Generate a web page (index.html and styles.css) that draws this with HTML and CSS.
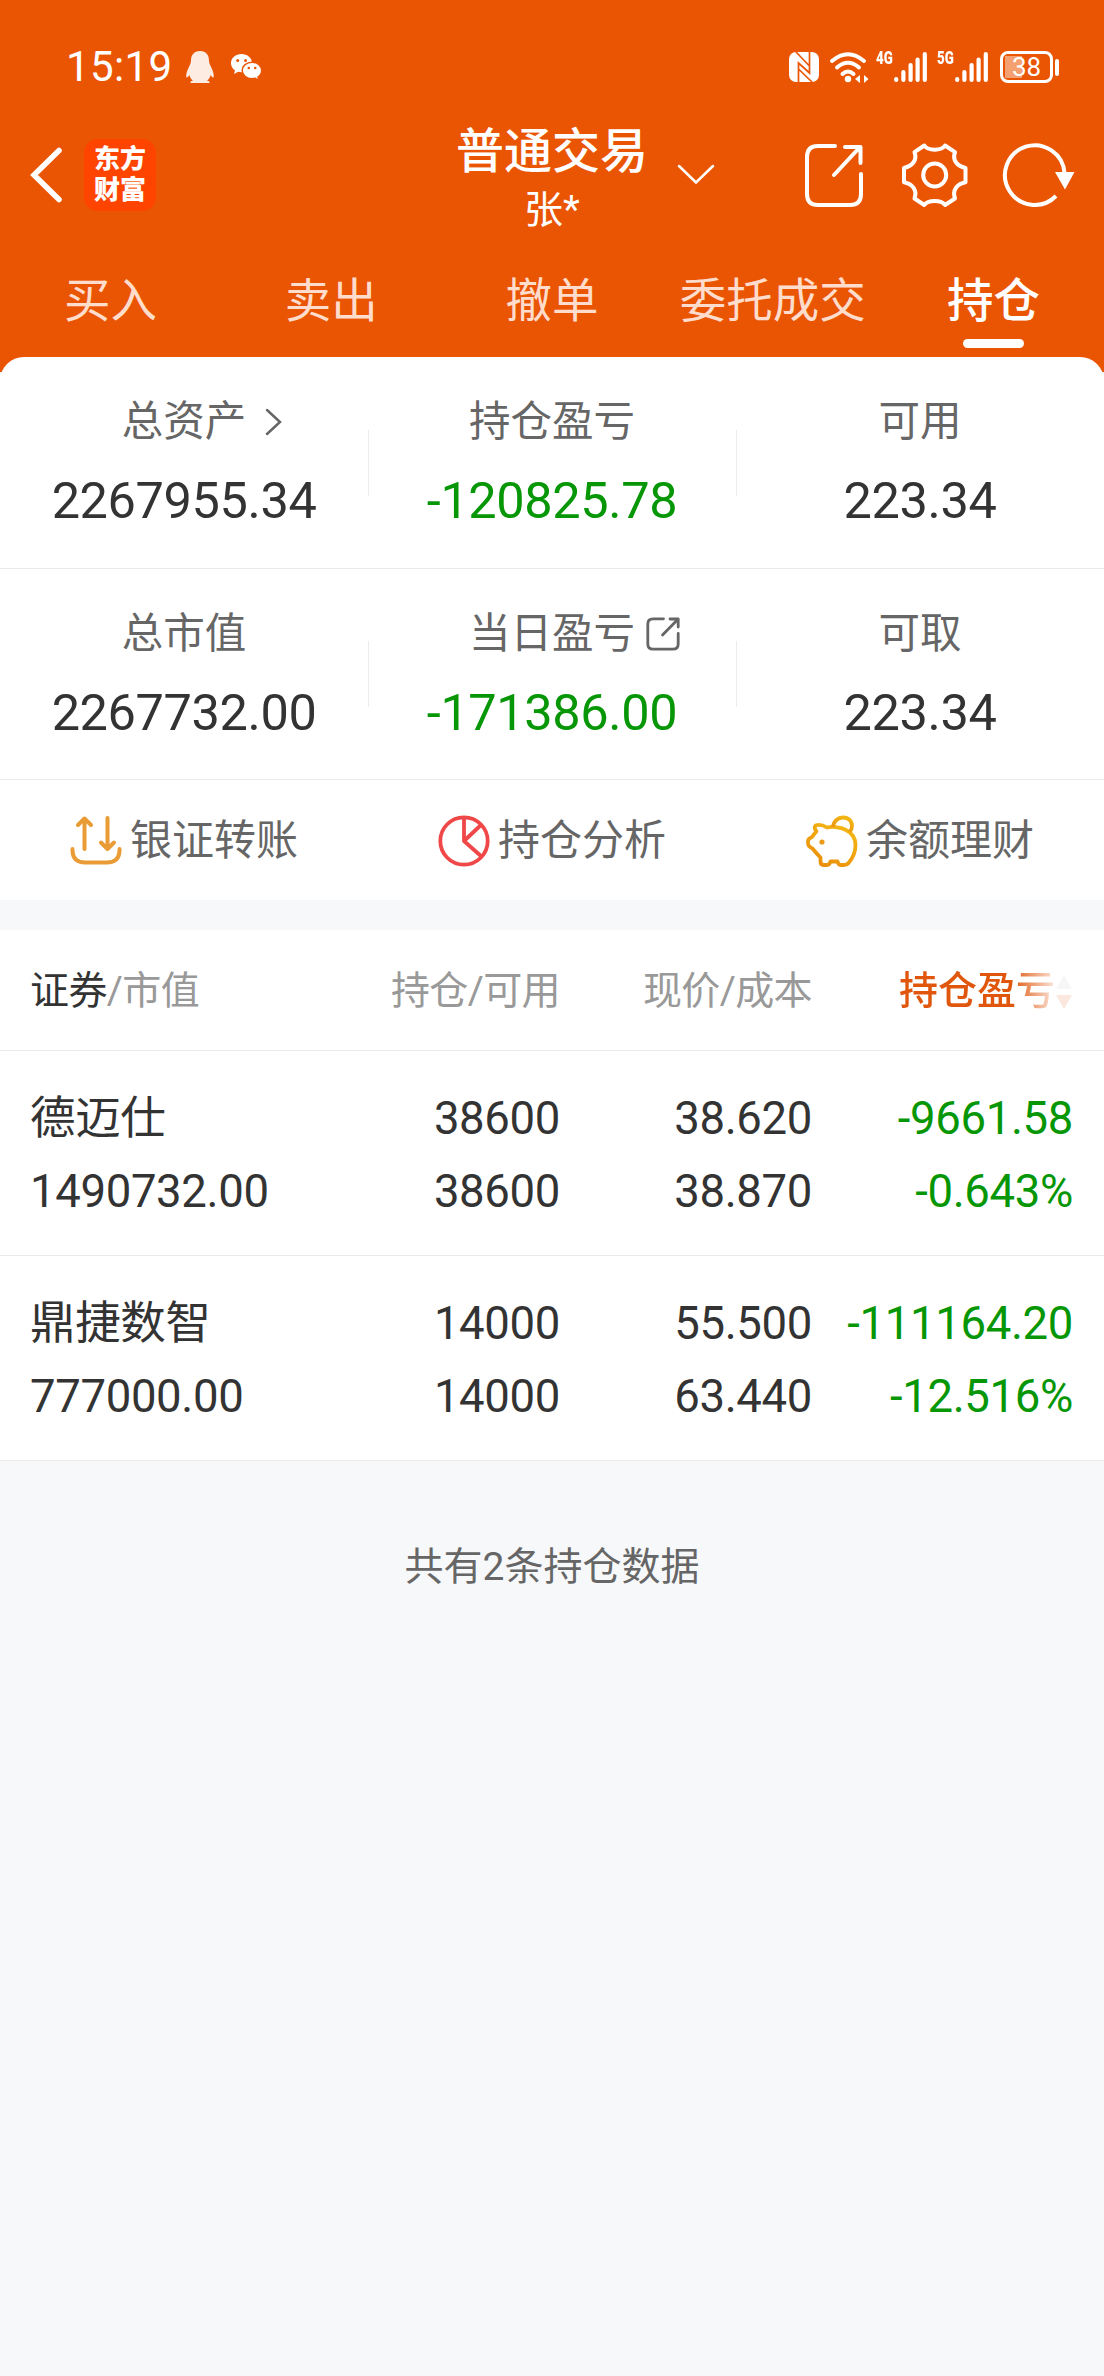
FILE: index.html
```html
<!DOCTYPE html>
<html lang="zh-CN">
<head>
<meta charset="utf-8">
<title>普通交易 - 持仓</title>
<link rel="stylesheet" href="styles.css">
</head>
<body>
<header class="header">
  <div class="status">
    <span class="time">15:19</span>
    <svg class="qq" width="30" height="34" viewBox="0 0 30 34"><path fill="#fdece2" d="M15 1C8.500 1 6 5.500 6 10.500C6 13 5 14.500 3.500 18C1.500 22 .8 26 1.500 27.500C2.300 28 3.500 26.500 4.500 25C5 28 6.500 29.500 8 30.500C6 31 5 32 5.500 33H24.500C25 32 24 31 22 30.500C23.500 29.500 25 28 25.500 25C26.500 26.500 27.700 28 28.500 27.500C29.200 26 28.500 22 26.500 18C25 14.500 24 13 24 10.500C24 5.500 21.500 1 15 1Z"/></svg>
    <svg class="wechat" width="32" height="28" viewBox="0 0 32 28"><path fill="#fff" d="M11.500 1C5.500 1 1 5 1 10.200c0 3 1.600 5.500 4 7.200L4 21l4.200-2.200c1 .3 2.200.4 3.300.4C17.500 19.200 22 15.300 22 10.200S17.500 1 11.500 1Z"/><path fill="#fff" stroke="#ea5504" stroke-width="1.500" d="M22 9.200c-5.400 0-9.800 3.700-9.800 8.300s4.400 8.200 9.800 8.200c1.100 0 2.200-.1 3.200-.4l3.700 2-.9-3.300c2.300-1.600 3.700-3.800 3.700-6.500 0-4.600-4.300-8.300-9.700-8.300Z"/><g fill="#ea5504"><circle cx="7.700" cy="7.500" r="1.500"/><circle cx="15.500" cy="7.500" r="1.500"/><circle cx="18.800" cy="15" r="1.300"/><circle cx="25.200" cy="15" r="1.300"/></g></svg>
    <div class="status-right">
      <svg width="30" height="30" viewBox="0 0 30 30"><rect width="30" height="30" rx="7" fill="#fff"/><path d="M9.500 30V11L20.500 21V0M7 0L20.500 14M9.500 17L23 30" fill="none" stroke="#ea5504" stroke-width="1.700"/></svg>
      <svg class="wifi" width="39" height="31" viewBox="0 0 39 31"><g fill="none" stroke="#fff" stroke-width="4" stroke-linecap="round"><path d="M2 9Q18 -4.500 34 9"/><path d="M7 15.500Q18 6 29 15.500"/><path d="M12.500 22Q18 17 23.500 22"/></g><circle cx="18" cy="27" r="3.200" fill="#fff"/><path d="M25 27l5-4v8zM38.500 27l-4.500-4v8zM31.500 23v8" fill="#fff"/></svg>
      <span class="net"><span>4G</span></span>
      <svg class="bars" width="33" height="30" viewBox="0 0 33 30"><path d="M2.200 27v1M9.400 20v8M16.600 13v15M23.600 7.500v20.500M30.800 2v26" stroke="#fff" stroke-width="4.200" stroke-linecap="round"/></svg>
      <span class="net net-2"><span>5G</span></span>
      <svg class="bars" width="33" height="30" viewBox="0 0 33 30"><path d="M2.200 27v1M9.400 20v8M16.600 13v15M23.600 7.500v20.500M30.800 2v26" stroke="#fff" stroke-width="4.200" stroke-linecap="round"/></svg>
      <div class="battery">38</div><i class="nub"></i>
    </div>
  </div>

  <div class="nav">
    <svg class="back" width="34" height="58" viewBox="0 0 34 58"><path d="M30 4.500L5 29L30 53.500" fill="none" stroke="#fff" stroke-width="5.500" stroke-linecap="round"/></svg>
    <div class="logo"><span>东方</span><span>财富</span></div>
    <div class="account">
      <div class="title">普通交易</div>
      <div class="user">张*</div>
    </div>
    <svg class="down" width="38" height="22" viewBox="0 0 38 22"><path d="M2 3L19 19.500L36 3" fill="none" stroke="#fff" stroke-width="2.500" stroke-linecap="round"/></svg>
    <svg class="share" width="60" height="66" viewBox="0 0 60 66"><g fill="none" stroke="#fff" stroke-width="4" stroke-linecap="round" stroke-linejoin="round"><path d="M31 3H14Q3 3 3 14V51Q3 62 14 62H46Q57 62 57 51V31"/><path d="M30 32L56 4M41 4H56.500V20"/></g></svg>
    <svg class="gear" width="66" height="66" viewBox="0 0 66 66"><g fill="none" stroke="#fff" stroke-width="4" stroke-linejoin="round"><path d="M22.300 2.500C26 8 39.400 8 43 2.500L53 9.200C50 17 55 23 63.500 25V39.300C55 41 50 47 53 55.500L43 62C39.400 56.500 26 56.500 22.300 62L12.500 55.500C15.500 47 10.500 41 2 39.300V25C10.500 23 15.500 17 12.500 9.200Z"/><circle cx="32.700" cy="32" r="11.500"/></g></svg>
    <svg class="refresh" width="74" height="66" viewBox="0 0 74 66"><path d="M61.500 30A29.800 29.800 0 1 0 53 53" fill="none" stroke="#fff" stroke-width="4"/><path d="M52 29H71.500L62 46.500Z" fill="#fff"/></svg>
  </div>

  <nav class="tabs">
    <a>买入</a><a>卖出</a><a>撤单</a><a>委托成交</a><a class="active">持仓</a>
  </nav>
</header>

<div class="lip"></div>
<section class="summary">
  <div class="row">
    <div class="cell"><div class="label"><span>总资产</span><svg class="go" width="18" height="30" viewBox="0 0 18 30"><path d="M2 3L15 15L2 27" fill="none" stroke="#666" stroke-width="2.500" stroke-linecap="round"/></svg></div><div class="num">2267955.34</div></div>
    <div class="cell"><div class="label"><span>持仓盈亏</span></div><div class="num green">-120825.78</div></div>
    <div class="cell"><div class="label"><span>可用</span></div><div class="num">223.34</div></div>
  </div>
  <div class="row row-2">
    <div class="cell"><div class="label"><span>总市值</span></div><div class="num">2267732.00</div></div>
    <div class="cell"><div class="label"><span>当日盈亏</span><svg class="ext" width="34" height="34" viewBox="0 0 34 34"><g fill="none" stroke="#666" stroke-width="2.800" stroke-linecap="round" stroke-linejoin="round"><path d="M17.500 1.800H7Q1.800 1.800 1.800 7V27Q1.800 32.200 7 32.200H27Q32.200 32.200 32.200 27V16.500"/><path d="M16.500 18L32 2.200M24 2H32.200V10"/></g></svg></div><div class="num green">-171386.00</div></div>
    <div class="cell"><div class="label"><span>可取</span></div><div class="num">223.34</div></div>
  </div>
</section>

<section class="actions">
  <a><svg width="52" height="52" viewBox="0 0 52 52"><g fill="none" stroke="#e99c35" stroke-width="4" stroke-linecap="round" stroke-linejoin="round"><path d="M14.500 34V3.500M8 10L14.500 3.500L21 10M37.500 3V34M31 27.500L37.500 34L44 27.500"/><path d="M2.500 34V36Q3 47.500 15 47.500H37Q49 47.500 49.500 36V34"/></g></svg>银证转账</a>
  <a><svg width="52" height="52" viewBox="0 0 52 52"><g fill="none" stroke="#f04848" stroke-width="3.800" stroke-linejoin="round"><circle cx="26" cy="26" r="23.700"/><path d="M26 2.500V26L43.500 9.500M26 26L43.500 41.500"/></g></svg>持仓分析</a>
  <a><svg width="52" height="52" viewBox="0 0 52 52"><defs><linearGradient id="pig" x1="0" y1="1" x2=".6" y2="0"><stop offset="0" stop-color="#e98a0b"/><stop offset="1" stop-color="#f3b514"/></linearGradient></defs><g fill="none" stroke="url(#pig)" stroke-width="3.800" stroke-linejoin="round"><path d="M9.500 10.500C13 9 17 10 21 12.500C25 11.500 34 11.500 40 15C47 18.500 49.500 24 49.500 30C49.500 37 46 44 42.500 48Q41 50 38 50H34.500Q32.500 50 31.500 46.500H24.500Q23.500 50 21 50H17.500Q14.500 50 14.500 46V42.500Q10 38 6.500 33.500Q2 31.500 2 28V26.500Q2 23.500 6 22Q8 19 10.500 16.500Q7.500 12.500 9.500 10.500Z"/><path d="M27 12C28 -.5 46 -.5 46 11Q46 14.500 43.500 17"/></g><circle cx="16" cy="27" r="2.600" fill="#e99a18"/></svg>余额理财</a>
</section>

<section class="table">
  <div class="tr thead">
    <div><b>证券</b>/市值</div><div>持仓/可用</div><div>现价/成本</div>
    <div class="sort"><span>持仓盈亏</span><svg width="18" height="36" viewBox="0 0 18 36"><path d="M9 1L17 15H1Z" fill="#f7f7f7"/><path d="M1 21H17L9 35Z" fill="#fce7df"/></svg></div>
  </div>
  <div class="tr">
    <div>德迈仕<br>1490732.00</div><div>38600<br>38600</div><div>38.620<br>38.870</div><div class="green">-9661.58<br>-0.643%</div>
  </div>
  <div class="tr">
    <div>鼎捷数智<br>777000.00</div><div>14000<br>14000</div><div>55.500<br>63.440</div><div class="green">-111164.20<br>-12.516%</div>
  </div>
</section>
<footer class="count">共有2条持仓数据</footer>
</body>
</html>
```
FILE: styles.css
```css
* { box-sizing: border-box; }
body {
  margin: 0;
  width: 1104px;
  min-height: 2376px;
  background: #f7f8fa;
  color: #333;
  font-family: Roboto, "Noto Sans CJK SC", sans-serif;
}
svg { display: block; flex: none; overflow: visible; }

/* orange header */
.header { height: 357px; background: #ea5504; color: #fff; }
.status {
  display: flex;
  align-items: center;
  height: 134px;
  padding: 0 45px 0 66px;
}
.time { width: 119px; font-size: 42px; line-height: 50px; letter-spacing: .4px; }
.wechat { margin-left: 15px; }
.status-right { display: flex; align-items: center; margin-left: auto; }
.wifi { margin-left: 11px; }
.net {
  align-self: flex-start;
  width: 17px;
  margin: -2px 0 0 7px;
  font-size: 19px;
  line-height: 17px;
  font-weight: 900;
  white-space: nowrap;
}
.net span { display: inline-block; transform: scaleX(.7); transform-origin: 0 50%; }
.net-2 { margin-left: 10px; }
.bars { margin-left: 1px; }
.battery {
  width: 53px;
  height: 32px;
  margin-left: 12px;
  border: 3px solid #fff;
  border-radius: 8px;
  background: linear-gradient(90deg, #f4a070 17px, transparent 17px) 2px 2px / 43px 22px no-repeat;
  font-size: 26px;
  line-height: 27px;
  text-align: center;
}
.nub { width: 4px; height: 17px; margin-left: 2px; border-radius: 2px; background: #fff; }

.nav { display: flex; align-items: flex-start; height: 123px; padding-left: 29px; }
.back { margin-top: 12px; }
.logo {
  display: flex;
  flex-direction: column;
  width: 72px;
  height: 72px;
  margin: 5px 0 0 21px;
  padding-top: 2px;
  border-radius: 14px;
  background: #ff4400;
  font: 900 26px/31px "Noto Sans CJK SC", sans-serif;
  text-align: center;
}
.account { width: 194px; margin-left: 299px; text-align: center; }
.title { margin-top: -12px; font-size: 48px; line-height: 60px; font-weight: 500; }
.user { font-size: 39px; line-height: 50px; margin-top: 3px; }
.down { margin: 29px 0 0 28px; }
.share { margin: 9px 0 0 89px; }
.gear { margin: 9px 0 0 38px; }
.refresh { margin: 9px 0 0 35px; }

.tabs { display: flex; height: 100px; }
.tabs a {
  display: flex;
  flex: 1;
  flex-direction: column;
  align-items: center;
  padding-top: 12px;
  font-size: 46.500px;
  line-height: 64px;
  color: #ffdccb;
}
.tabs .active { color: #fff; font-weight: 500; }
.active::after { content: ""; width: 61px; height: 9px; margin-top: 6px; border-radius: 5px; background: #fff; }

/* rounded top edge of the white sheet */
.lip { height: 15px; margin-bottom: -15px; background: #ea5504; }
.summary { position: relative; border-radius: 24px 24px 0 0; background: #fff; }
.row { display: flex; height: 212px; border-bottom: 1px solid #ebebeb; }
.row-2 { height: 211px; }
.cell { display: flex; flex: 1; flex-direction: column; padding-top: 35px; text-align: center; }
.cell + .cell {
  background: linear-gradient(#ececec, #ececec) 0 73px / 1px 66px no-repeat;
}
.row-2 .cell + .cell { background-position: 0 72px; }
.label {
  display: grid;
  grid-template-columns: 1fr auto 1fr;
  align-items: center;
  font-size: 41.500px;
  line-height: 60px;
  color: #666;
}
.label span { grid-column: 2; }
.go { margin-left: 19px; }
.ext { margin-left: 11px; }
.num { margin-top: 19px; font-size: 50.500px; line-height: 60px; letter-spacing: -.4px; }
.green { color: #069606; }

.actions { display: flex; height: 120px; background: #fff; }
.actions a {
  display: flex;
  flex: 1;
  align-items: center;
  justify-content: center;
  gap: 8px;
  padding-top: 1px;
  font-size: 42px;
  line-height: 60px;
  color: #666;
}

/* holdings */
.table { margin-top: 30px; background: #fff; }
.tr {
  display: grid;
  grid-template-columns: 270px 260px 252px 261px;
  height: 205px;
  padding: 31px 31px 0 30px;
  border-bottom: 1px solid #ebebeb;
  font-size: 45.500px;
  line-height: 73px;
  letter-spacing: -.35px;
  text-align: right;
}
.tr > :first-child { text-align: left; }
.thead { height: 121px; padding-top: 25px; font-size: 39px; letter-spacing: -.6px; color: #999; }
.thead b { font-weight: 400; color: #333; }
.sort {
  display: flex;
  align-items: center;
  align-self: start;
  justify-content: flex-end;
  font-weight: 500;
  letter-spacing: 0;
}
.sort span {
  background: linear-gradient(90deg, #e0560c 72%, #fbe6dc 100%);
  background-clip: text;
  color: transparent;
}
.count { padding-top: 76px; font-size: 39px; line-height: 60px; text-align: center; color: #666; }
```
